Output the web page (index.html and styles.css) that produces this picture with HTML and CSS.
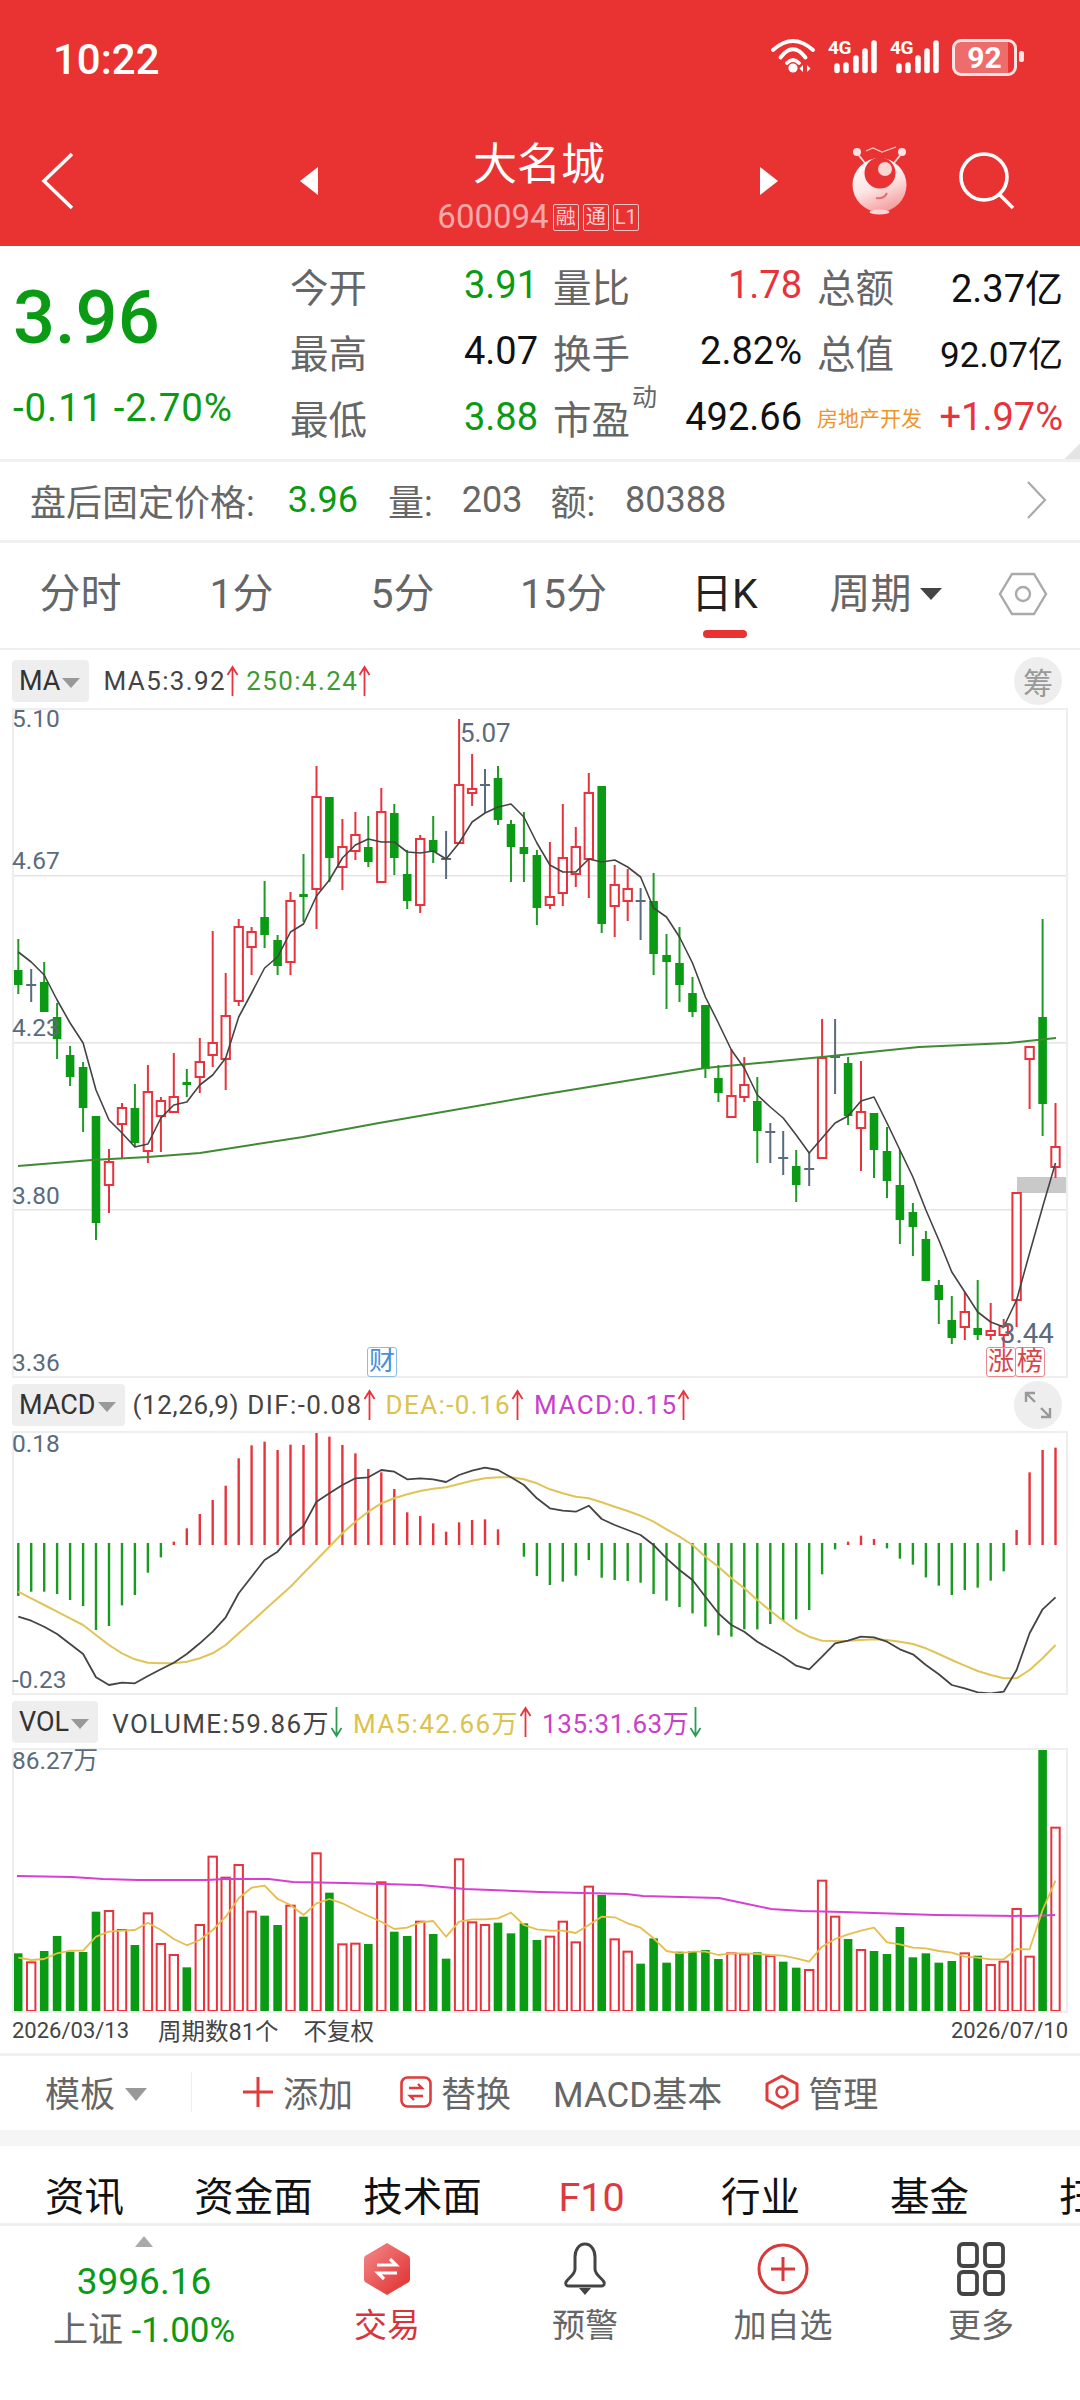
FILE: index.html
```html
<!DOCTYPE html>
<html lang="zh-CN">
<head>
<meta charset="UTF-8">
<meta name="viewport" content="width=device-width, initial-scale=1.0">
<title>大名城 600094</title>
<link rel="stylesheet" href="styles.css">
</head>
<body>
<svg class="defs" width="0" height="0">
  <symbol id="up" viewBox="0 0 12 32"><path d="M6 31V2M1 10 6 2l5 8" fill="none" stroke="currentColor" stroke-width="1.8"/></symbol>
  <symbol id="down" viewBox="0 0 12 32"><path d="M6 1v29M1 22l5 8 5-8" fill="none" stroke="currentColor" stroke-width="1.8"/></symbol>
</svg>

<header class="top">
  <div class="status">
    <span class="time">10:22</span>
    <div class="status-icons">
      <svg class="wifi" width="46" height="36" viewBox="0 0 46 36">
        <path d="M3 11Q23-7 43 11M10.500 18.500Q23 2 35.500 18.500M17 24Q23 18 29 24" fill="none" stroke="#fff" stroke-width="3.800" stroke-linecap="round"/>
        <circle cx="23" cy="29" r="4.600" fill="#fff"/>
        <path d="M33 33V26l-3.500 3.500zM37 33V26l3.500 3.500z" fill="#fff"/>
      </svg>
      <div class="sig"><span class="sig-tag">4G</span>
        <svg width="50" height="36" viewBox="0 0 50 36"><path d="M9 31.500V27M18 31.500V26M28 31.500V19M37 31.500V12M46 31.500V4" stroke="#fff" stroke-width="5.500" stroke-linecap="round"/></svg>
      </div>
      <div class="sig"><span class="sig-tag">4G</span>
        <svg width="50" height="36" viewBox="0 0 50 36"><path d="M9 31.500V27M18 31.500V26M28 31.500V19M37 31.500V12M46 31.500V4" stroke="#fff" stroke-width="5.500" stroke-linecap="round"/></svg>
      </div>
      <div class="battery"><span>92</span></div>
      <i class="nub"></i>
    </div>
  </div>
  <div class="nav">
    <svg class="back" width="34" height="60" viewBox="0 0 34 60"><path d="M31 3 3 30l28 27" fill="none" stroke="#fff" stroke-width="3.500"/></svg>
    <i class="tri tri-l"></i>
    <div class="stock">
      <div class="stock-name">大名城</div>
      <div class="stock-code">600094<b>融</b><b>通</b><b>L1</b></div>
    </div>
    <i class="tri tri-r"></i>
    <svg class="mascot" width="60" height="72" viewBox="0 0 60 72">
      <defs>
        <linearGradient id="egg" x1="0.2" y1="0" x2="0.6" y2="1"><stop offset="0" stop-color="#fff"/><stop offset="0.55" stop-color="#fde4e4"/><stop offset="1" stop-color="#f59c9c"/></linearGradient>
      </defs>
      <path d="M7 8 15 18M52 8 44 18" fill="none" stroke="#fbdada" stroke-width="1.800"/>
      <path d="M16 6l7-3 9 4 14-5" fill="none" stroke="#fbc8c8" stroke-width="1.200"/>
      <circle cx="7" cy="7" r="4" fill="#fde0e0"/><circle cx="52" cy="7" r="4" fill="#fde0e0"/>
      <circle cx="29.500" cy="40" r="27" fill="url(#egg)"/>
      <circle cx="30" cy="28" r="15.500" fill="#e93232"/>
      <circle cx="35" cy="24" r="7" fill="#fbd4d4"/>
      <path d="M26 53c5 1 9-1 11-5" fill="none" stroke="#e86a6a" stroke-width="2"/>
      <ellipse cx="29.500" cy="67" rx="10" ry="2.600" fill="#fbd6d6"/>
    </svg>
    <svg class="search" width="60" height="60" viewBox="0 0 60 60"><circle cx="27" cy="26" r="23" fill="none" stroke="#fff" stroke-width="3.600"/><path d="M43 44 56 57" stroke="#fff" stroke-width="3.600"/></svg>
  </div>
</header>

<section class="stats">
  <div class="price">
    <div class="price-now">3.96</div>
    <div class="price-chg">-0.11 -2.70%</div>
  </div>
  <div class="quote">
    <div class="cell"><span class="lbl">今开</span><span class="val green">3.91</span></div>
    <div class="cell"><span class="lbl">量比</span><span class="val red">1.78</span></div>
    <div class="cell"><span class="lbl">总额</span><span class="val">2.37亿</span></div>
    <div class="cell"><span class="lbl">最高</span><span class="val">4.07</span></div>
    <div class="cell"><span class="lbl">换手</span><span class="val">2.82%</span></div>
    <div class="cell"><span class="lbl">总值</span><span class="val val-sm">92.07亿</span></div>
    <div class="cell"><span class="lbl">最低</span><span class="val green">3.88</span></div>
    <div class="cell"><span class="lbl">市盈<sup>动</sup></span><span class="val">492.66</span></div>
    <div class="cell"><span class="lbl sector">房地产开发</span><span class="val red">+1.97%</span></div>
  </div>
  <i class="fold"></i>
</section>

<section class="after">
  <span>盘后固定价格:</span><span class="green after-price">3.96</span>
  <span class="after-item">量:</span><span class="after-num">203</span>
  <span class="after-item a-last">额:</span><span class="after-num a-num-last">80388</span>
  <svg class="after-more" width="22" height="40" viewBox="0 0 22 40"><path d="M2 2 19 20 2 38" fill="none" stroke="#aaa" stroke-width="2.200"/></svg>
</section>

<nav class="periods">
  <span>分时</span><span>1分</span><span>5分</span><span>15分</span>
  <span class="on">日K</span>
  <span class="more">周期<i class="caret"></i></span>
  <svg class="hex" width="50" height="44" viewBox="0 0 50 44"><path d="M14 2h22l12 20-12 20H14L2 22z" fill="none" stroke="#aaa" stroke-width="2.400"/><circle cx="25" cy="22" r="7" fill="none" stroke="#aaa" stroke-width="2.400"/></svg>
</nav>

<div class="ind-head ind-k">
  <span class="chip">MA<i></i></span>
  <span class="ink ml">MA5:3.92</span><svg class="arr red"><use href="#up"/></svg>
  <span class="line-green ml7">250:4.24</span><svg class="arr red"><use href="#up"/></svg>
  <span class="round">筹</span>
</div>
<div class="panel panel-k">
  <svg class="plot" id="kline" viewBox="14 710 1052 666"></svg>
  <span class="tick t-510">5.10</span>
  <span class="tick t-467">4.67</span>
  <span class="tick t-423">4.23</span>
  <span class="tick t-380">3.80</span>
  <span class="tick t-336">3.36</span>
  <span class="tick hi">5.07</span>
  <span class="tick lo">3.44</span>
  <span class="tag tag-cai">财</span>
  <span class="tag tag-z">涨</span>
  <span class="tag tag-b">榜</span>
</div>

<div class="ind-head ind-sm">
  <span class="chip">MACD<i></i></span>
  <span class="ink ml4 tight">(12,26,9)</span>
  <span class="ink ml4">DIF:-0.08</span><svg class="arr red"><use href="#up"/></svg>
  <span class="yellow ml8">DEA:-0.16</span><svg class="arr red"><use href="#up"/></svg>
  <span class="purple ml8">MACD:0.15</span><svg class="arr red"><use href="#up"/></svg>
  <span class="round">
    <svg width="30" height="30" viewBox="0 0 30 30"><path d="M3 12V3h9M3 3l9 9M27 18v9h-9M27 27l-9-9" fill="none" stroke="#999" stroke-width="2.400"/></svg>
  </span>
</div>
<div class="panel panel-macd">
  <svg class="plot" id="macd" viewBox="14 1433 1052 260"></svg>
  <span class="tick t-018">0.18</span>
  <span class="tick t-023">-0.23</span>
</div>

<div class="ind-head ind-sm">
  <span class="chip">VOL<i></i></span>
  <span class="ink ml">VOLUME:59.86万</span><svg class="arr dn"><use href="#down"/></svg>
  <span class="yellow ml8">MA5:42.66万</span><svg class="arr red"><use href="#up"/></svg>
  <span class="purple ml8 tight">135:31.63万</span><svg class="arr dn"><use href="#down"/></svg>
</div>
<div class="panel panel-vol">
  <svg class="plot" id="vol" viewBox="14 1750 1052 261"></svg>
  <span class="tick t-vol">86.27万</span>
</div>

<div class="dates">
  <span>2026/03/13</span><span class="d-count">周期数81个</span><span class="d-adj">不复权</span><span class="d-end">2026/07/10</span>
</div>

<div class="tools">
  <span class="tpl">模板<i class="caret caret-sm"></i></span>
  <svg class="t-plus" width="32" height="32" viewBox="0 0 32 32"><path d="M16 1v30M1 16h30" stroke="#e03a3a" stroke-width="3"/></svg>
  <span>添加</span>
  <svg class="t-swap" width="32" height="32" viewBox="0 0 32 32"><rect x="1.500" y="1.500" width="29" height="29" rx="6" fill="none" stroke="#e03a3a" stroke-width="2.600"/><path d="M9 12h13l-4-4M23 20H10l4 4" fill="none" stroke="#e03a3a" stroke-width="2.400"/></svg>
  <span>替换</span>
  <span class="t-macd">MACD基本</span>
  <svg class="t-hex" width="36" height="36" viewBox="0 0 36 36"><path d="M18 2 33 10v16L18 34 3 26V10z" fill="none" stroke="#e03a3a" stroke-width="3" stroke-linejoin="round"/><circle cx="18" cy="18" r="5.500" fill="none" stroke="#e03a3a" stroke-width="2.600"/></svg>
  <span>管理</span>
</div>
<div class="band"></div>

<nav class="subtabs">
  <span>资讯</span><span>资金面</span><span>技术面</span><span class="f10">F10</span><span>行业</span><span>基金</span><span>扫雷</span>
</nav>

<footer class="bottom">
  <div class="index">
    <i class="index-tri"></i>
    <div class="index-val green">3996.16</div>
    <div class="index-name">上证 <span class="green">-1.00%</span></div>
  </div>
  <div class="tab tab-on">
    <svg width="48" height="54" viewBox="0 0 48 54">
      <defs><linearGradient id="trade" x1="0" y1="0" x2="1" y2="1"><stop offset="0" stop-color="#f48a8a"/><stop offset="1" stop-color="#e02c2c"/></linearGradient></defs>
      <path d="M24 1 46 14Q47 15 47 17V37Q47 39 46 40L24 53 2 40Q1 39 1 37V17Q1 15 2 14z" fill="url(#trade)"/>
      <path d="M14 23h19l-6-6M34 31H15l6 6" fill="none" stroke="#fff" stroke-width="3.200"/>
    </svg>
    <span>交易</span>
  </div>
  <div class="tab">
    <svg width="48" height="54" viewBox="0 0 48 54"><path d="M24 2c6 0 10 6 10 13v12c0 6 7 9 9 13 1 2 0 4-3 4H8c-3 0-4-2-3-4 2-4 9-7 9-13V15C14 8 18 2 24 2z" fill="none" stroke="#444" stroke-width="3"/><path d="M18 46h12l-6 7z" fill="#444"/></svg>
    <span>预警</span>
  </div>
  <div class="tab">
    <svg width="52" height="54" viewBox="0 0 52 54"><circle cx="26" cy="27" r="24" fill="none" stroke="#d63a3a" stroke-width="3"/><path d="M26 15v24M14 27h24" stroke="#d63a3a" stroke-width="3"/></svg>
    <span>加自选</span>
  </div>
  <div class="tab">
    <svg width="48" height="54" viewBox="0 0 48 54"><g fill="none" stroke="#444" stroke-width="3.800"><rect x="2" y="2" width="18" height="22" rx="4"/><rect x="28" y="2" width="18" height="22" rx="4"/><rect x="2" y="30" width="18" height="22" rx="4"/><rect x="28" y="30" width="18" height="22" rx="4"/></g></svg>
    <span>更多</span>
  </div>
</footer>
<script src="chart.js"></script>
</body>
</html>
```

FILE: styles.css
```css
* {
  box-sizing: border-box;
}
body {
  margin: 0;
  width: 1080px;
  height: 2400px;
  overflow: hidden;
  background: #fff;
  color: #222;
  font-family: Roboto, "Noto Sans CJK SC", sans-serif;
}
i {
  display: block;
  font-style: normal;
}
.defs {
  position: absolute;
}
.green { color: #0a9a14; }
.red { color: #e8333c; }

/* red header */
.top {
  height: 246px;
  background: #e93232;
  color: #fff;
}
.status {
  height: 120px;
  display: flex;
  justify-content: space-between;
  padding: 38px 56px 0 53px;
}
.time {
  font-size: 42px;
  line-height: 44px;
  font-weight: 500;
}
.status-icons {
  display: flex;
  align-items: flex-start;
  gap: 12px;
  margin-top: 1px;
}
.sig {
  position: relative;
  width: 50px;
  height: 36px;
}
.sig svg {
  display: block;
}
.sig-tag {
  position: absolute;
  left: 0;
  top: -1px;
  font-size: 19px;
  line-height: 20px;
  font-weight: 700;
  letter-spacing: -0.5px;
}
.battery {
  width: 65px;
  height: 37px;
  border: 3px solid #fde4e4;
  border-radius: 9px;
  background: linear-gradient(90deg, #ee6c6c 90%, #e93232 90%);
  text-align: center;
}
.battery span {
  display: block;
  font-size: 30px;
  line-height: 31px;
  font-weight: 700;
}
.nub {
  width: 5px;
  height: 11px;
  margin: 12px 0 0 -10px;
  border-radius: 2px;
  background: #fde4e4;
}
.nav {
  height: 126px;
  display: flex;
  align-items: center;
}
.back {
  margin-left: 41px;
  margin-top: -4px;
}
.tri {
  width: 0;
  height: 0;
  margin-top: -5px;
  border-top: 14px solid transparent;
  border-bottom: 14px solid transparent;
}
.tri-l {
  margin-left: 225px;
  border-right: 18px solid #fff;
}
.tri-r {
  border-left: 18px solid #fff;
}
.stock {
  width: 442px;
  padding-top: 5px;
  text-align: center;
}
.stock-name {
  font-size: 44px;
  line-height: 52px;
}
.stock-code {
  display: flex;
  justify-content: center;
  align-items: center;
  margin-top: 11px;
  margin-left: -2px;
  color: #f6a9a9;
  font-size: 33px;
  line-height: 30px;
}
.stock-code b {
  width: 26px;
  height: 27px;
  margin-left: 4px;
  border: 1px solid #f8c4c4;
  border-radius: 2px;
  color: #fbd2d2;
  font-size: 20px;
  line-height: 25px;
  font-weight: 400;
}
.mascot {
  margin-left: 72px;
  margin-top: -4px;
}
.search {
  margin-left: 47px;
  margin-top: -4px;
}

/* quote block */
.stats {
  position: relative;
  height: 216px;
  display: flex;
  border-bottom: 3px solid #f0f0f0;
}
.price {
  width: 290px;
  padding: 30px 0 0 13px;
}
.price-now {
  font-size: 74px;
  line-height: 84px;
  font-weight: 500;
  color: #0a9a14;
}
.price-chg {
  margin-top: 28px;
  font-size: 38.5px;
  line-height: 40px;
  letter-spacing: 0.9px;
  color: #0a9a14;
  white-space: nowrap;
}
.quote {
  display: grid;
  grid-template-columns: 248px 249px 246px;
  grid-auto-rows: 66px;
  column-gap: 15px;
  padding-top: 6px;
}
.cell {
  display: flex;
  justify-content: space-between;
  align-items: center;
}
.lbl {
  position: relative;
  font-size: 38.5px;
  color: #666;
}
.lbl sup {
  position: absolute;
  left: 79px;
  top: -5px;
  font-size: 25px;
  line-height: 28px;
}
.sector {
  font-size: 21px;
  color: #f0952a;
}
.val {
  font-size: 38px;
  color: #111;
}
.val-sm {
  font-size: 35px;
}
.val.green { color: #0a9a14; }
.val.red { color: #e8333c; }
.fold {
  position: absolute;
  right: 0;
  bottom: 0;
  width: 15px;
  height: 16px;
  background: linear-gradient(135deg, transparent 50%, #e4e4e4 50%);
}

/* after-hours row */
.after {
  height: 81px;
  display: flex;
  align-items: center;
  padding: 0 32px 2px 30px;
  border-bottom: 3px solid #f0f0f0;
  color: #666;
  font-size: 36px;
}
.after-price {
  margin-left: 33px;
}
.after-item {
  margin-left: 30px;
}
.after-num {
  margin-left: 29px;
}
.a-last {
  margin-left: 28px;
}
.a-num-last {
  margin-left: 30px;
}
.after-more {
  margin-left: auto;
}

/* period tabs */
.periods {
  height: 107px;
  display: grid;
  grid-template-columns: repeat(6, 161px) 1fr;
  align-items: center;
  justify-items: center;
  padding-bottom: 3px;
  border-bottom: 2px solid #f0f0f0;
  color: #666;
  font-size: 41px;
  line-height: 48px;
}
.periods .on {
  position: relative;
  color: #222;
}
.periods .on::after {
  content: "";
  position: absolute;
  left: 12px;
  bottom: -20px;
  width: 44px;
  height: 8px;
  border-radius: 4px;
  background: #e93232;
}
.more {
  display: flex;
  align-items: center;
  gap: 8px;
}
.caret {
  width: 0;
  height: 0;
  border-left: 11px solid transparent;
  border-right: 11px solid transparent;
  border-top: 12px solid #444;
}
.caret-sm {
  margin-top: 6px;
  border-top-color: #999;
  border-top-width: 13px;
}

/* indicator heads */
.ind-head {
  height: 58px;
  display: flex;
  align-items: center;
  padding: 0 18px 0 12px;
  color: #444;
  font-size: 26px;
  letter-spacing: 1.4px;
  white-space: nowrap;
}
.ind-k {
  padding-top: 4px;
}
.ind-sm {
  height: 53px;
}
.chip {
  display: flex;
  align-items: center;
  height: 42px;
  padding: 0 0 0 7px;
  border-radius: 4px;
  background: #eee;
  color: #333;
  font-size: 27px;
  letter-spacing: 0;
}
.chip i {
  width: 0;
  height: 0;
  margin: 4px 9px 0 2px;
  border-left: 9px solid transparent;
  border-right: 9px solid transparent;
  border-top: 10px solid #999;
}
.ml { margin-left: 14px; }
.ml4 { margin-left: 8px; }
.ml7 { margin-left: 7px; }
.ml8 { margin-left: 10px; }
.tight { letter-spacing: 0.6px; }
.ink { color: #444; }
.line-green { color: #3f9a35; }
.yellow { color: #dcc24e; }
.purple { color: #c93fc9; }
.arr {
  width: 13px;
  height: 32px;
}
.arr.dn { color: #2a9d52; }
.round {
  display: flex;
  align-items: center;
  justify-content: center;
  width: 48px;
  height: 48px;
  margin-left: auto;
  border-radius: 50%;
  background: #eee;
  color: #999;
  font-size: 30px;
  letter-spacing: 0;
}

/* chart panels */
.panel {
  position: relative;
  width: 1056px;
  margin-left: 12px;
  border: 2px solid #eee;
}
.panel-k { height: 670px; }
.panel-macd { height: 264px; }
.panel-vol { height: 265px; }
.plot {
  display: block;
  width: 100%;
  height: 100%;
}
.tick {
  position: absolute;
  left: -2px;
  color: #5a6b7d;
  font-size: 24.5px;
  line-height: 26px;
}
.t-510 { top: -4px; }
.t-467 { top: 138px; }
.t-423 { top: 305px; }
.t-380 { top: 473px; }
.t-336 { top: 640px; }
.t-018 { top: -2px; }
.t-023 { top: 234px; }
.t-vol { top: -2px; }
.hi {
  left: 446px;
  top: 8px;
  font-size: 26px;
  line-height: 30px;
}
.lo {
  left: 986px;
  top: 609px;
  font-size: 27.5px;
  line-height: 30px;
}
.tag {
  position: absolute;
  top: 637px;
  width: 30px;
  height: 30px;
  border: 1px solid;
  border-radius: 3px;
  font-size: 26px;
  line-height: 27px;
  text-align: center;
}
.tag-cai {
  left: 353px;
  color: #4a90d9;
  border-color: #8fbbe8;
}
.tag-z,
.tag-b {
  color: #d8434a;
  border-color: #e58a8e;
}
.tag-z { left: 972px; }
.tag-b { left: 1001px; }

/* dates + tools */
.dates {
  height: 40px;
  display: flex;
  align-items: center;
  padding: 0 12px 6px;
  color: #444;
  font-size: 22px;
}
.d-count {
  margin-left: 29px;
  font-size: 23.5px;
}
.d-adj {
  margin-left: 25px;
  font-size: 23.5px;
}
.d-end { margin-left: auto; }
.tools {
  height: 77px;
  display: flex;
  align-items: center;
  padding: 0 0 3px 45px;
  border-top: 3px solid #f0f0f0;
  color: #666;
  font-size: 35px;
}
.tpl {
  display: flex;
  align-items: center;
  gap: 10px;
  height: 40px;
  padding-right: 44px;
  border-right: 1px solid #eee;
}
.t-plus { margin: 0 9px 0 50px; }
.t-swap { margin: 0 9px 0 47px; }
.t-macd { margin-left: 42px; }
.t-hex { margin: 0 8px 0 42px; }
.band {
  height: 16px;
  background: #f5f5f5;
}
.subtabs {
  height: 80px;
  display: grid;
  grid-template-columns: repeat(7, 169px);
  overflow: hidden;
  padding-top: 30px;
  border-bottom: 3px solid #f0f0f0;
  color: #111;
  font-size: 39.5px;
  line-height: 44px;
  text-align: center;
  white-space: nowrap;
}
.f10 { color: #dd3a3f; }

/* bottom bar */
.bottom {
  height: 174px;
  display: grid;
  grid-template-columns: 288px repeat(4, 198px);
}
.index {
  text-align: center;
  padding-top: 10px;
}
.index-tri {
  width: 0;
  height: 0;
  margin: 0 auto;
  border-left: 9px solid transparent;
  border-right: 9px solid transparent;
  border-bottom: 11px solid #aaa;
}
.index-val {
  margin-top: 13px;
  font-size: 37px;
  line-height: 44px;
}
.index-name {
  margin-top: 5px;
  color: #666;
  font-size: 35px;
  line-height: 44px;
}
.tab {
  display: flex;
  flex-direction: column;
  align-items: center;
  padding-top: 16px;
  color: #666;
  font-size: 33px;
  line-height: 40px;
}
.tab span {
  margin-top: 10px;
}
.tab-on {
  color: #d8343a;
}
```

FILE: chart.js
```js
// 81 daily candles, coordinates are page pixels
const X = i => 18.25 + 12.966 * i;
const RED = '#e8333c', GREEN = '#0a9a14', DOJI = '#5a6b7d';

// type, wick top, body top, body bottom, wick bottom
const candles = [
  ['g',939,970,985,994],['d',969,985,985,1002],['g',962,982,1012,1012],['g',1003,1017,1039,1059],
  ['g',1046,1055,1077,1086],['g',1062,1067,1108,1132],['g',1116,1116,1223,1240],['r',1149,1162,1185,1213],
  ['r',1103,1108,1124,1158],['g',1084,1108,1143,1147],['r',1065,1092,1151,1163],['r',1097,1101,1116,1152],
  ['r',1053,1097,1112,1112],['g',1069,1082,1085,1097],['r',1038,1062,1077,1093],['r',931,1043,1055,1067],
  ['r',973,1016,1059,1090],['r',919,927,1001,1006],['r',927,932,947,975],['g',881,917,935,948],
  ['g',935,940,966,975],['r',892,901,962,975],['g',854,894,897,922],['r',766,797,889,929],
  ['g',797,797,858,882],['r',819,847,867,890],['r',812,835,851,860],['g',816,847,862,867],
  ['r',788,812,882,882],['g',804,813,858,875],['g',850,874,901,909],['r',835,839,905,913],
  ['g',816,840,852,863],['d',831,859,859,879],['r',719,785,843,843],['r',754,789,793,806],
  ['d',769,785,785,813],['g',766,778,820,825],['g',820,824,847,882],['g',812,847,854,882],
  ['g',850,855,908,925],['r',842,897,905,909],['r',804,858,893,906],['r',827,847,874,887],
  ['r',773,793,859,898],['g',786,786,924,933],['r',865,885,906,937],['r',869,889,901,921],
  ['d',888,901,901,940],['g',873,901,954,975],['g',934,955,962,1009],['g',927,963,985,1002],
  ['g',977,993,1012,1017],['g',1005,1005,1069,1078],['g',1065,1078,1093,1102],['r',1049,1096,1117,1117],
  ['r',1057,1085,1097,1102],['g',1077,1101,1131,1163],['d',1123,1132,1132,1163],['d',1131,1158,1158,1175],
  ['g',1150,1166,1185,1202],['d',1153,1169,1169,1186],['r',1019,1058,1158,1158],['d',1019,1057,1057,1094],
  ['g',1057,1063,1116,1125],['r',1061,1112,1128,1171],['g',1113,1113,1150,1178],['g',1127,1151,1181,1198],
  ['g',1150,1185,1220,1244],['g',1203,1212,1227,1256],['g',1231,1239,1281,1281],['g',1280,1285,1300,1324],
  ['g',1296,1320,1338,1344],['r',1292,1312,1327,1340],['g',1280,1328,1335,1340],['r',1303,1331,1335,1340],
  ['r',1319,1326,1335,1347],['r',1193,1193,1300,1327],['r',1047,1047,1059,1109],['g',919,1017,1104,1136],
  ['r',1103,1147,1167,1178]
];

const ma5 = [952,962,975,1000,1023,1043,1090,1120,1133,1147,1144,1118,1105,1102,1085,1075,1058,1017,993,968,
  957,932,924,896,880,858,845,839,842,842,852,853,851,859,843,822,813,807,804,817,843,865,872,872,859,862,860,
  867,877,908,917,937,963,997,1023,1050,1068,1095,1107,1118,1135,1153,1138,1123,1116,1101,1097,1123,1150,1177,
  1210,1240,1272,1292,1312,1322,1327,1300,1253,1207,1163];

const ma250 = [[18,1166],[92,1160],[148,1157],[200,1153],[303,1137],[379,1123],[540,1095],[705,1068],
  [822,1057],[919,1047],[1008,1043],[1056,1038]];

// macd panel, bar ends and lines as y = 1370 + v / 3
const hist = [678,665,665,672,690,708,780,768,706,675,608,562,515,475,432,390,347,265,226,215,240,224,225,180,200,
  225,250,297,307,357,427,438,460,485,457,450,448,478,0,560,618,645,635,617,570,623,630,633,638,672,692,711,730,
  770,796,800,778,778,762,752,748,720,613,538,515,497,507,535,566,584,622,647,675,660,653,632,604,480,307,240,233];

const dif = [740,752,770,792,822,852,922,945,938,940,918,898,878,852,820,785,742,670,620,570,545,500,468,395,370,
  345,325,322,300,305,328,325,328,336,315,302,293,300,322,345,385,415,422,425,407,447,465,480,495,525,565,600,630,
  680,730,765,785,815,838,860,887,898,860,820,812,800,802,815,838,853,885,913,945,955,967,970,965,900,790,718,682];

const dea = [665,685,705,725,745,765,795,825,850,868,878,880,880,875,865,850,825,790,755,720,685,650,610,570,530,
  490,455,425,400,385,373,363,356,352,342,332,325,322,322,328,340,358,370,380,385,397,410,423,437,455,478,500,525,
  560,590,625,655,690,722,752,780,800,812,813,812,810,808,810,815,822,835,852,870,887,903,915,925,925,900,865,825];

// volume panel, y = 1690 + v / 3
const vol = [790,817,783,738,785,786,665,663,720,765,670,762,795,832,705,500,563,525,665,677,705,647,680,490,608,
  763,761,762,577,725,738,695,732,806,508,697,705,698,730,700,750,740,695,757,590,615,748,785,821,745,818,785,783,
  780,807,790,793,787,798,815,833,840,572,680,747,780,783,792,711,802,790,818,813,790,797,825,815,657,800,178,413];
const volRed = new Set([1,7,8,10,11,12,14,15,16,17,18,21,23,25,26,28,31,34,35,36,41,42,43,44,46,47,55,56,58,61,62,63,
  65,73,75,76,77,78,80]);

const volMa5 = [803,810,807,790,782,782,740,725,722,720,698,720,747,766,750,720,680,625,593,587,627,645,675,640,627,
  640,660,678,695,717,713,697,693,740,695,688,688,685,668,705,718,722,722,729,705,680,682,700,713,745,783,790,785,
  785,795,790,790,792,795,797,805,815,770,747,733,722,713,757,763,773,775,783,788,800,803,808,808,777,778,660,572];

const volMa135 = [[17,1876],[72,1877],[103,1879],[138,1880],[207,1880],[224,1879],[269,1879],[293,1882],[344,1883],
  [420,1885],[465,1889],[540,1892],[626,1894],[643,1896],[719,1898],[771,1909],[802,1911],[843,1912],[936,1915],
  [1029,1916],[1055,1915]];

function rect(x, y, w, h, fill, extra) {
  return `<rect x="${x.toFixed(1)}" y="${y}" width="${w}" height="${h}" fill="${fill}" ${extra || ''}/>`;
}

function line(points, color, width) {
  const pts = points.map(p => p[0].toFixed(1) + ',' + p[1].toFixed(1)).join(' ');
  return `<polyline points="${pts}" fill="none" stroke="${color}" stroke-width="${width}" stroke-linejoin="round"/>`;
}

function series(values, toY) {
  return values.map((v, i) => [X(i), toY(v)]);
}

function drawCandle(c, i) {
  const [type, wt, bt, bb, wb] = c;
  const x = X(i);
  if (type === 'd') {
    return rect(x - 1, wt, 2, wb - wt, DOJI) + rect(x - 5, bt - 1, 10, 2, DOJI);
  }
  if (type === 'g') {
    return rect(x - 1, wt, 2, wb - wt, '#1f9a24') + rect(x - 4.3, bt, 8.6, Math.max(bb - bt, 3), GREEN);
  }
  return rect(x - 1, wt, 2, wb - wt, RED) +
    rect(x - 4.2, bt, 8.4, bb - bt, '#fff', `stroke="${RED}" stroke-width="2"`);
}

function drawKline() {
  let s = '';
  [875, 1042, 1209].forEach(y => { s += rect(14, y, 1052, 1.5, '#e4e4e4'); });
  s += rect(1017, 1177, 49, 16, '#c9c9c9');
  candles.forEach((c, i) => { s += drawCandle(c, i); });
  s += line(ma250, '#3f8a33', 2);
  s += line(series(ma5, v => v), '#444', 1.6);
  document.getElementById('kline').innerHTML = s;
}

function drawMacd() {
  const y = v => 1370 + v / 3;
  let s = '';
  hist.forEach((v, i) => {
    if (!v) return;
    const x = X(i) - 1.2;
    if (v < 520) s += rect(x, y(v), 2.4, 1545 - y(v), RED);
    else s += rect(x, 1543, 2.4, y(v) - 1543, '#1a9a20');
  });
  s += line(series(dea, y), '#e0c455', 2);
  s += line(series(dif, y), '#444', 1.8);
  document.getElementById('macd').innerHTML = s;
}

function drawVol() {
  const y = v => 1690 + v / 3;
  let s = '';
  vol.forEach((v, i) => {
    const x = X(i);
    if (volRed.has(i)) s += rect(x - 4.2, y(v), 8.4, 2011 - y(v), 'none', `stroke="${RED}" stroke-width="2"`);
    else s += rect(x - 4.3, y(v), 8.6, 2012 - y(v), GREEN);
  });
  s += line(volMa135, '#d63fd6', 2);
  s += line(series(volMa5, y), '#e6be4a', 1.8);
  document.getElementById('vol').innerHTML = s;
}

drawKline();
drawMacd();
drawVol();
```
